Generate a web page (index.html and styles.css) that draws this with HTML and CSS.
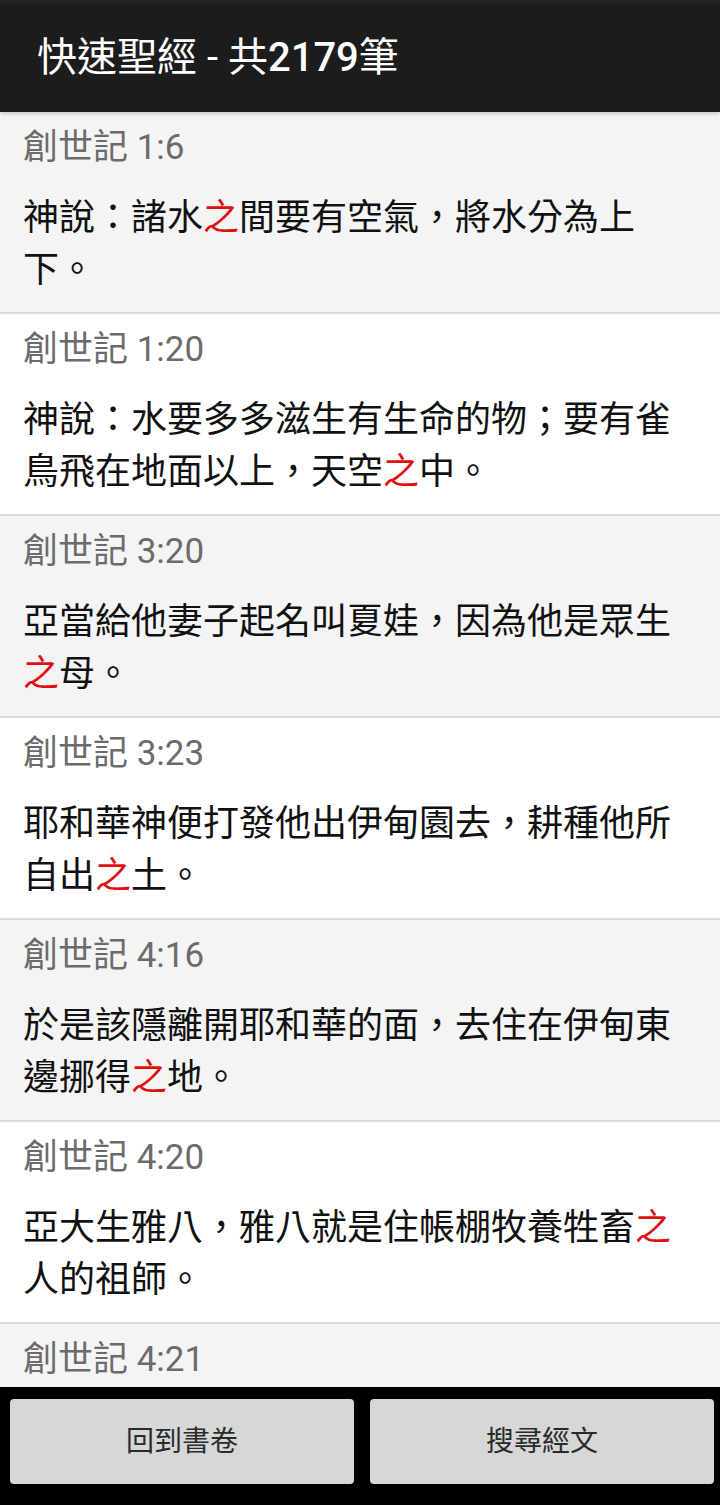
FILE: index.html
```html
<!DOCTYPE html>
<html lang="zh-Hant">
<head>
<meta charset="utf-8">
<title>快速聖經</title>
<link rel="stylesheet" href="styles.css">
</head>
<body>
<div class="app">
  <header class="appbar">
    <h1 class="appbar-title">快速聖經 - 共<span class="num">2179</span>筆</h1>
  </header>
  <main class="list">
    <div class="item odd">
      <div class="ref">創世記 1:6</div>
      <div class="verse">神說：諸水<span class="hl">之</span>間要有空氣，將水分為上下。</div>
    </div>
    <div class="item even">
      <div class="ref">創世記 1:20</div>
      <div class="verse">神說：水要多多滋生有生命的物；要有雀鳥飛在地面以上，天空<span class="hl">之</span>中。</div>
    </div>
    <div class="item odd">
      <div class="ref">創世記 3:20</div>
      <div class="verse">亞當給他妻子起名叫夏娃，因為他是眾生<span class="hl">之</span>母。</div>
    </div>
    <div class="item even">
      <div class="ref">創世記 3:23</div>
      <div class="verse">耶和華神便打發他出伊甸園去，耕種他所自出<span class="hl">之</span>土。</div>
    </div>
    <div class="item odd">
      <div class="ref">創世記 4:16</div>
      <div class="verse">於是該隱離開耶和華的面，去住在伊甸東邊挪得<span class="hl">之</span>地。</div>
    </div>
    <div class="item even">
      <div class="ref">創世記 4:20</div>
      <div class="verse">亞大生雅八，雅八就是住帳棚牧養牲畜<span class="hl">之</span>人的祖師。</div>
    </div>
    <div class="item odd">
      <div class="ref">創世記 4:21</div>
    </div>
  </main>
  <footer class="bottombar">
    <button class="btn" type="button">回到書卷</button>
    <button class="btn" type="button">搜尋經文</button>
  </footer>
</div>
</body>
</html>
```

FILE: styles.css
```css
* {
  box-sizing: border-box;
}

html, body {
  margin: 0;
  padding: 0;
}

body {
  font-family: Roboto, "Noto Sans CJK TC", "Noto Sans", sans-serif;
  background: #000;
}

.app {
  width: 720px;
  height: 1505px;
  display: flex;
  flex-direction: column;
  overflow: hidden;
}

.appbar {
  flex: 0 0 112px;
  background: #1c1c1c;
  border-top: 4px solid #222222;
  display: flex;
  align-items: center;
  padding: 0 0 0 37px;
  position: relative;
  z-index: 2;
  box-shadow: 0 2px 4px rgba(0, 0, 0, 0.18);
}

.appbar-title {
  margin: 0;
  color: #ffffff;
  font-size: 40px;
  font-weight: 400;
  line-height: 58px;
  white-space: nowrap;
}

.num {
  font-weight: 500;
}

.list {
  flex: 1 1 auto;
  overflow: hidden;
  background: #ffffff;
  display: flex;
  flex-direction: column;
}

.item {
  flex: 0 0 auto;
  padding: 12px 23px 16px 23px;
  border-bottom: 2px solid #dcdcdc;
}

.item.odd {
  background: #f4f4f4;
}

.item.even {
  background: #ffffff;
}

.ref {
  color: #6b6b6b;
  font-size: 35px;
  line-height: 48px;
  margin-bottom: 20px;
}

.verse {
  color: #111111;
  font-size: 36px;
  line-height: 52px;
}

.hl {
  color: #e01010;
}

.bottombar {
  flex: 0 0 118px;
  background: #000000;
  display: flex;
  gap: 16px;
  padding: 12px 6px 21px 10px;
  position: relative;
  z-index: 2;
}

.btn {
  flex: 1 1 0;
  height: 85px;
  border: none;
  border-radius: 4px;
  background: #d6d7d7;
  color: #2a2a2a;
  font-family: Roboto, "Noto Sans CJK TC", sans-serif;
  font-size: 28px;
  line-height: 40px;
  padding: 0;
}
```
